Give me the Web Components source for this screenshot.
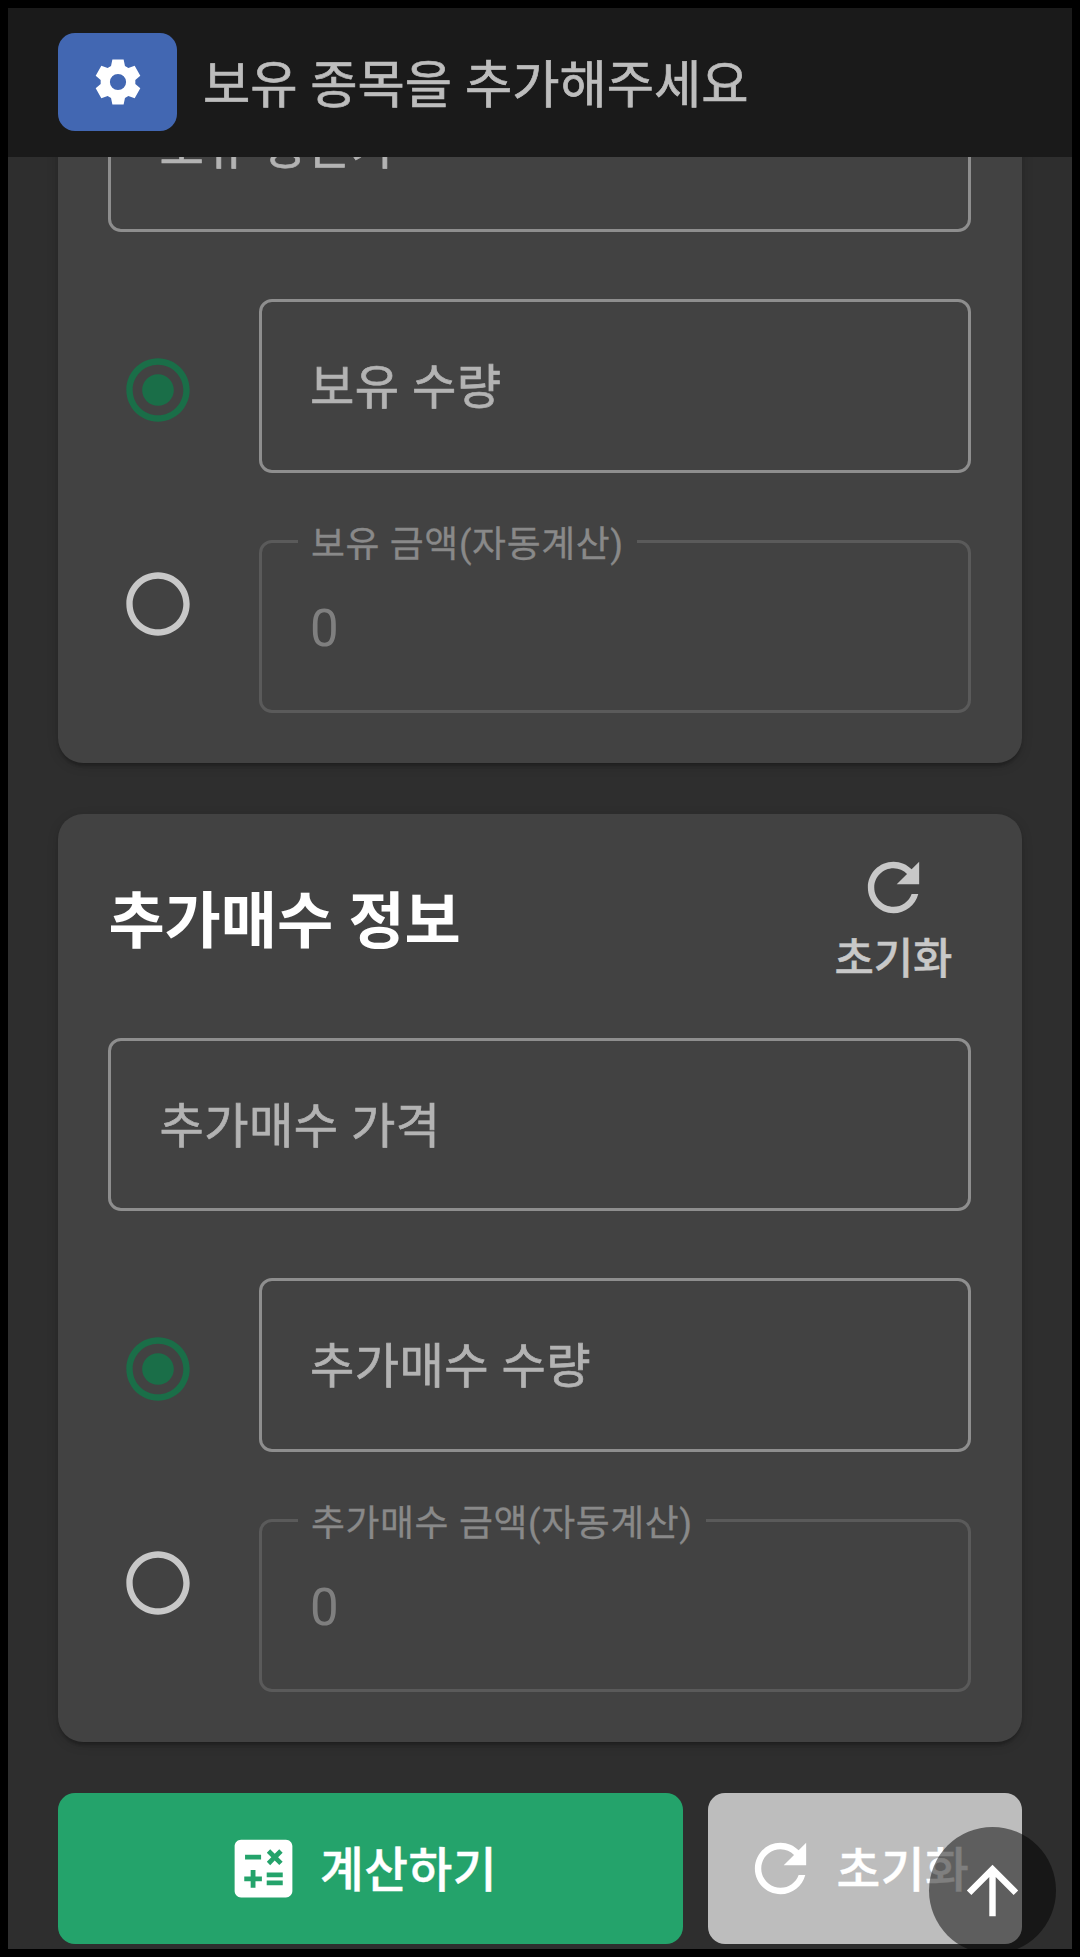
<!DOCTYPE html>
<html lang="ko">
<head>
<meta charset="utf-8">
<title>추가매수 계산기</title>
<style>
  html, body {
    margin: 0;
    height: 100%;
    background: #000;
    overflow: hidden;
  }
</style>
</head>
<body>
<calc-app>
  <app-header slot="header">보유 종목을 추가해주세요</app-header>

  <info-card>
    <outlined-field label="보유 평단가"></outlined-field>
    <radio-fields>
      <outlined-field label="보유 수량"></outlined-field>
      <outlined-field label="보유 금액(자동계산)" value="0" disabled></outlined-field>
    </radio-fields>
  </info-card>

  <info-card heading="추가매수 정보">
    <outlined-field label="추가매수 가격"></outlined-field>
    <radio-fields>
      <outlined-field label="추가매수 수량"></outlined-field>
      <outlined-field label="추가매수 금액(자동계산)" value="0" disabled></outlined-field>
    </radio-fields>
  </info-card>

  <button-row>
    <action-button icon="calculate" kind="primary">계산하기</action-button>
    <action-button icon="refresh" kind="neutral">초기화</action-button>
  </button-row>

  <scroll-top slot="overlay"></scroll-top>
</calc-app>

<script>
const ICONS = {
  settings: 'M8.9 4.9L9.5 2h5l.6 2.9 1.5.87 2.81-.94 2.5 4.34-2.21 1.96v1.74l2.21 1.96-2.5 4.34-2.81-.94-1.5.87-.6 2.9h-5l-.6-2.9-1.5-.87-2.81.94-2.5-4.34 2.21-1.96v-1.74L2.09 9.17l2.5-4.34 2.81.94zM12 8.4a3.6 3.6 0 1 0 0 7.2 3.6 3.6 0 1 0 0-7.2z',
  refresh: 'M17.65 6.35C16.2 4.9 14.21 4 12 4c-4.42 0-7.99 3.58-7.99 8s3.57 8 7.99 8c3.73 0 6.84-2.55 7.73-6h-2.08c-.82 2.33-3.04 4-5.65 4-3.31 0-6-2.69-6-6s2.69-6 6-6c1.66 0 3.14.69 4.22 1.78L13 11h7V4l-2.35 2.35z',
  calculate: 'M19 3H5c-1.1 0-2 .9-2 2v14c0 1.1.9 2 2 2h14c1.1 0 2-.9 2-2V5c0-1.1-.9-2-2-2zm-5.97 4.06L14.09 6l1.41 1.41L16.91 6l1.06 1.06-1.41 1.41 1.41 1.41-1.06 1.06-1.41-1.4-1.41 1.41-1.06-1.06 1.41-1.41-1.41-1.42zm-6.78.66h5v1.5h-5v-1.5zM11.5 16h-2v2H8v-2H6v-1.5h2v-2h1.5v2h2V16zm6.5 1.25h-5v-1.5h5v1.5zm0-2.5h-5v-1.5h5v1.5z',
  arrowUp: 'M4 12l1.41 1.41L11 7.83V20h2V7.83l5.58 5.59L20 12l-8-8-8 8z',
  radioOn: 'M12 7c-2.76 0-5 2.24-5 5s2.24 5 5 5 5-2.24 5-5-2.24-5-5-5zm0-5C6.48 2 2 6.48 2 12s4.48 10 10 10 10-4.48 10-10S17.52 2 12 2zm0 18c-4.42 0-8-3.58-8-8s3.58-8 8-8 8 3.58 8 8-3.58 8-8 8z',
  radioOff: 'M12 2C6.48 2 2 6.48 2 12s4.48 10 10 10 10-4.48 10-10S17.52 2 12 2zm0 18c-4.42 0-8-3.58-8-8s3.58-8 8-8 8 3.58 8 8-3.58 8-8 8z'
};

/** Base for elements that render once into an open shadow root */
class BaseElement extends HTMLElement {
  constructor() {
    super();
    this.attachShadow({ mode: 'open' });
  }

  connectedCallback() {
    this.shadowRoot.innerHTML = this.template();
  }
}

/** <md-icon name="refresh"> - 24x24 icon scaled to --icon-size */
class MdIcon extends BaseElement {
  template() {
    return `
      <style>
        :host { display: block; flex: none; width: var(--icon-size, 77px); height: var(--icon-size, 77px); }
        svg { display: block; width: 100%; height: 100%; fill: currentColor; }
      </style>
      <svg viewBox="0 0 24 24" aria-hidden="true"><path fill-rule="evenodd" d="${ICONS[this.getAttribute('name')]}"/></svg>
    `;
  }
}

/** Page shell: header on top, scrolled content pinned to its end */
class CalcApp extends BaseElement {
  template() {
    return `
      <style>
        :host {
          position: relative;
          display: flex;
          flex-direction: column;
          box-sizing: border-box;
          height: 1957px;
          border: 8px solid #000;
          background: #2e2e2e;
          overflow: hidden;
          color: #fff;
          font-family: Roboto, "Noto Sans CJK KR", sans-serif;
        }
        main {
          flex: 1;
          min-height: 0;
          display: flex;
          flex-direction: column;
          justify-content: flex-end;
          gap: 51px;
          padding: 0 50px 5px;
          overflow: hidden;
        }
      </style>
      <slot name="header"></slot>
      <main><slot></slot></main>
      <slot name="overlay"></slot>
    `;
  }
}

class AppHeader extends BaseElement {
  template() {
    return `
      <style>
        :host {
          position: relative;
          z-index: 1;
          display: flex;
          align-items: flex-start;
          flex: none;
          gap: 26px;
          box-sizing: border-box;
          height: 149px;
          padding: 25px 50px 0;
          background: #1a1a1a;
          color: #bdbdbd;
          font-size: 51.4px;
          line-height: 76px;
          -webkit-text-stroke: .7px currentColor;
        }
        button {
          display: grid;
          place-items: center;
          width: 119px;
          height: 98px;
          padding: 0;
          border: 0;
          border-radius: 17px;
          background: #4267b2;
          color: #fff;
          --icon-size: 54px;
        }
        span { padding-top: 15px; }
      </style>
      <button aria-label="설정"><md-icon name="settings"></md-icon></button>
      <span><slot></slot></span>
    `;
  }
}

class InfoCard extends BaseElement {
  template() {
    const heading = this.getAttribute('heading');
    const header = heading ? `
      <header>
        <h2>${heading}</h2>
        <button><md-icon name="refresh"></md-icon><span>초기화</span></button>
      </header>` : '';
    return `
      <style>
        :host {
          display: flex;
          flex: none;
          flex-direction: column;
          gap: 67px;
          box-sizing: border-box;
          padding: 50px 51px 50px 50.4px;
          border-radius: 25px;
          background: #424242;
          box-shadow: 0 6px 3px -3px rgba(0,0,0,.12), 0 3px 3px rgba(0,0,0,.1), 0 3px 12px rgba(0,0,0,.14);
        }
        header {
          display: flex;
          justify-content: space-between;
          align-items: flex-start;
          box-sizing: border-box;
          height: 173.5px;
          margin: -17px 0 -50px;
          padding: 0 18.5px 0 0;
        }
        h2 {
          margin: 29px 0 0;
          font-size: 61.1px;
          line-height: 92px;
          font-weight: 700;
        }
        button {
          display: flex;
          flex-direction: column;
          align-items: center;
          margin-top: 2px;
          padding: 0;
          border: 0;
          background: none;
          color: #c8c8c8;
          font: 500 42.8px/64px Roboto, "Noto Sans CJK KR", sans-serif;
        }
        button span { padding-top: 1px; -webkit-text-stroke: .4px currentColor; }
      </style>
      ${header}
      <slot></slot>
    `;
  }
}

/** Outlined text field; with a value its label sits on the top border */
class OutlinedField extends BaseElement {
  template() {
    const value = this.getAttribute('value');
    return `
      <style>
        :host {
          position: relative;
          display: flex;
          align-items: center;
          box-sizing: border-box;
          height: 173.5px;
          padding: 0 48px;
          border: 3px solid #8e8e8e;
          border-radius: 13px;
          color: #b3b3b3;
          font-size: 48.2px;
          line-height: 72px;
          letter-spacing: .0094em;
          white-space: nowrap;
        }
        :host([disabled]) { border-color: #5a5a5a; color: #7f7f7f; }
        label { padding-top: 5px; -webkit-text-stroke: .7px currentColor; }
        .floating {
          position: absolute;
          left: 36px;
          top: -25px;
          padding: 0 13px;
          background: #424242;
          color: #898989;
          font-size: 36.9px;
          line-height: 54px;
          letter-spacing: .6px;
          -webkit-text-stroke: .3px currentColor;
        }
        .value { font-size: 51px; padding-top: 5px; }
      </style>
      ${value === null
        ? `<label>${this.getAttribute('label')}</label>`
        : `<label class="floating">${this.getAttribute('label')}</label><span class="value">${value}</span>`}
    `;
  }
}

/** Pair of fields with a radio beside each one, the first selected */
class RadioFields extends BaseElement {
  template() {
    return `
      <style>
        :host { display: grid; grid-template-columns: 150.6px 1fr; }
        .radios {
          display: flex;
          flex-direction: column;
          gap: 138.5px;
          padding: 52.5px 0 0 12px;
          color: #c8c8c8;
          --icon-size: 76px;
        }
        .on { color: #1a6e48; }
        .fields { display: flex; flex-direction: column; gap: 67px; }
      </style>
      <div class="radios">
        <md-icon class="on" name="radioOn"></md-icon>
        <md-icon name="radioOff"></md-icon>
      </div>
      <div class="fields"><slot></slot></div>
    `;
  }
}

class ButtonRow extends BaseElement {
  template() {
    return `
      <style>
        :host { display: grid; flex: none; grid-template-columns: 625px 1fr; gap: 25px; height: 151px; }
      </style>
      <slot></slot>
    `;
  }
}

class ActionButton extends BaseElement {
  template() {
    return `
      <style>
        :host { display: grid; }
        button {
          display: flex;
          align-items: center;
          justify-content: center;
          gap: 18px;
          padding: 0 19px 0 0;
          border: 0;
          border-radius: 17px;
          background: #24a36b;
          color: #fff;
          font: 500 47.6px/72px Roboto, "Noto Sans CJK KR", sans-serif;
          letter-spacing: .01em;
          white-space: nowrap;
        }
        span { padding-top: 5px; -webkit-text-stroke: .4px currentColor; }
        :host([kind="neutral"]) button { background: #bdbdbd; padding-right: 19px; }
      </style>
      <button><md-icon name="${this.getAttribute('icon')}"></md-icon><span><slot></slot></span></button>
    `;
  }
}

/** Floating button over the lower right corner */
class ScrollTop extends BaseElement {
  template() {
    return `
      <style>
        :host { position: absolute; right: 16px; bottom: -5px; z-index: 2; }
        button {
          display: grid;
          place-items: center;
          width: 127px;
          height: 127px;
          padding: 0;
          border: 0;
          border-radius: 50%;
          background: rgba(0,0,0,.5);
          color: #fff;
        }
      </style>
      <button aria-label="맨 위로"><md-icon name="arrowUp"></md-icon></button>
    `;
  }
}

customElements.define('md-icon', MdIcon);
customElements.define('calc-app', CalcApp);
customElements.define('app-header', AppHeader);
customElements.define('info-card', InfoCard);
customElements.define('outlined-field', OutlinedField);
customElements.define('radio-fields', RadioFields);
customElements.define('button-row', ButtonRow);
customElements.define('action-button', ActionButton);
customElements.define('scroll-top', ScrollTop);
</script>
</body>
</html>
